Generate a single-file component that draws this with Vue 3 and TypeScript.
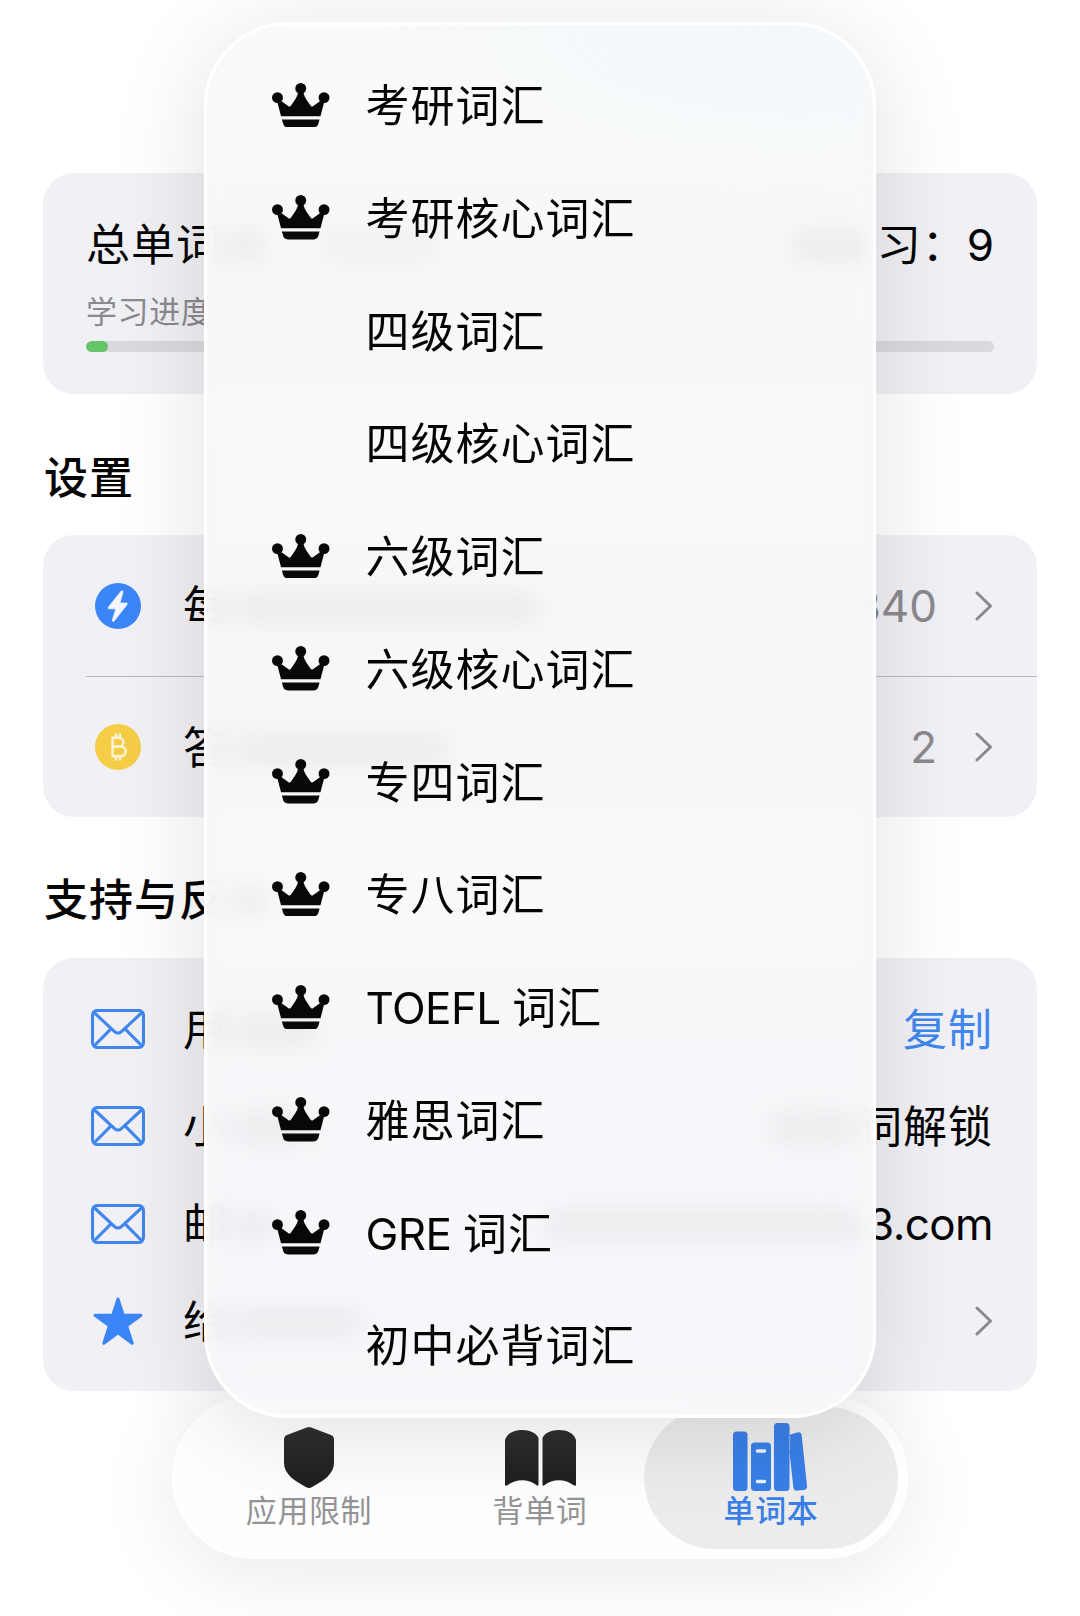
<script setup lang="ts">
interface Book {
  latin?: string
  name: string
  locked: boolean
}

// `trace` is the width of the part that lies under the glass menu.
interface SettingRow {
  icon: 'bolt' | 'coin'
  label: string
  trace: number
  value: string
}

interface SupportRow {
  icon: 'mail' | 'star'
  label: string
  trace: number
  value?: string
  valueTrace?: number
  kind?: 'link' | 'latin'
}

const learned = 9
const progress = 2.4

const books: Book[] = [
  { name: '考研词汇', locked: true },
  { name: '考研核心词汇', locked: true },
  { name: '四级词汇', locked: false },
  { name: '四级核心词汇', locked: false },
  { name: '六级词汇', locked: true },
  { name: '六级核心词汇', locked: true },
  { name: '专四词汇', locked: true },
  { name: '专八词汇', locked: true },
  { latin: 'TOEFL ', name: '词汇', locked: true },
  { name: '雅思词汇', locked: true },
  { latin: 'GRE ', name: '词汇', locked: true },
  { name: '初中必背词汇', locked: false },
]

const settings: SettingRow[] = [
  { icon: 'bolt', label: '每', trace: 306, value: '340' },
  { icon: 'coin', label: '答', trace: 216, value: '2' },
]

const support: SupportRow[] = [
  { icon: 'mail', label: '用', trace: 84, value: '复制', kind: 'link' },
  { icon: 'mail', label: '小', trace: 80, value: '词解锁', valueTrace: 86 },
  { icon: 'mail', label: '邮', trace: 40, value: '3.com', valueTrace: 320, kind: 'latin' },
  { icon: 'star', label: '给', trace: 128 },
]
</script>

<template>
  <div class="screen">
    <main class="page">
      <section class="card summary">
        <div class="summary-line">
          <span>总单词<i class="trace" style="width: 40px"></i><i class="trace far" style="width: 116px"></i></span>
          <span><i class="trace" style="width: 84px"></i>习：{{ learned }}</span>
        </div>
        <div class="caption">学习进度</div>
        <div class="track"><div class="fill" :style="{ width: progress + '%' }"></div></div>
      </section>

      <h2 class="heading">设置</h2>
      <section class="card settings">
        <div v-for="row in settings" :key="row.label" class="row setting">
          <span class="icon-slot">
            <svg v-if="row.icon === 'bolt'" width="46" height="46" viewBox="0 0 46 46">
              <circle cx="23" cy="23" r="23" fill="#3b86f7" />
              <path d="M26.2 8.1 13.400 24.200c-.6.8-.3 1.600.7 1.600h6.800l-3.500 11.400c-.3 1.200.9 1.700 1.700.8L32 21.600c.6-.8.3-1.500-.6-1.500h-6.500l3-10.900c.4-1.300-.9-2-1.700-1.100z" fill="#f4f6fd" stroke="#f4f6fd" stroke-width=".8" />
            </svg>
            <svg v-else width="46" height="46" viewBox="0 0 46 46">
              <circle cx="23" cy="23" r="23" fill="#f5cd47" />
              <path d="M17.500 13.800V32.200M17.500 13.800H24a4.300 4.300 0 0 1 0 8.700H17.500M24 22.500h1.800a4.800 4.800 0 0 1 0 9.700H17.500M21 10.500v3.300M25 10.500v3.300M21 32.200v3.400M25 32.200v3.400" fill="none" stroke="#fdf6dc" stroke-width="2.400" stroke-linecap="round" stroke-linejoin="round" />
            </svg>
          </span>
          <span class="label">{{ row.label }}<i class="trace" :style="{ width: row.trace + 'px' }"></i></span>
          <span class="value muted">{{ row.value }}</span>
          <svg class="chevron" width="18" height="30" viewBox="0 0 18 30">
            <path d="M2 2 15.500 15 2 28" />
          </svg>
        </div>
      </section>

      <h2 class="heading second">支持与反<i class="trace" style="width: 40px"></i></h2>
      <section class="card support">
        <div v-for="row in support" :key="row.label" class="row">
          <span class="icon-slot">
            <svg v-if="row.icon === 'mail'" width="54" height="40" viewBox="0 0 54 40" fill="none" stroke="#3f87ee" stroke-width="3.100">
              <rect x="1.500" y="1.500" width="51" height="37" rx="5" />
              <path d="M3 3.500 23.300 22.300q3.700 3.400 7.400 0L51 3.500M3 37 19.500 20.300M51 37 34.500 20.300" />
            </svg>
            <svg v-else width="50" height="49" viewBox="0 0 50 49">
              <path d="M25 2 30.300 18.300H48L33.700 28.900 39.200 46.300 25 35.700 10.800 46.300 16.300 28.900 2 18.300H19.700z" fill="#3b86f7" stroke="#3b86f7" stroke-width="3" stroke-linejoin="round" />
            </svg>
          </span>
          <span class="label">{{ row.label }}<i class="trace" :style="{ width: row.trace + 'px' }"></i></span>
          <span v-if="row.value" class="value" :class="row.kind"><i v-if="row.valueTrace" class="trace" :style="{ width: row.valueTrace + 'px' }"></i>{{ row.value }}</span>
          <svg v-else class="chevron" width="18" height="30" viewBox="0 0 18 30">
            <path d="M2 2 15.500 15 2 28" />
          </svg>
        </div>
      </section>
    </main>

    <nav class="tabs">
      <div class="tab">
        <svg width="50" height="61" viewBox="0 0 50 61">
          <path d="M22.800.600Q25-.4 27.200.600L47 8q3 1.200 3 4.500V36c0 11-10.500 18-22.300 24.200q-2.700 1.400-5.400 0C10.500 54 0 47 0 36V12.500Q0 9.200 3 8z" fill="url(#ink)" />
          <defs>
            <linearGradient id="ink" x1="0" y1="0" x2="0" y2="1">
              <stop offset="0" stop-color="#2f2f30" />
              <stop offset="1" stop-color="#1e1d1f" />
            </linearGradient>
          </defs>
        </svg>
        <span>应用限制</span>
      </div>
      <div class="tab">
        <svg width="71" height="61" viewBox="0 0 71 61">
          <path d="M0 13C2 6 9 3 17 3s14.500 3 16.500 8V57.500q0 2-2.200.600C24 51.500 10 51.500 2.500 58.300Q0 59.500 0 57.500zM71 13C69 6 62 3 54 3s-14.500 3-16.500 8V57.500q0 2 2.200.600C47 51.500 61 51.500 68.500 58.300q2.500 1.200 2.500-.800z" fill="url(#ink)" />
        </svg>
        <span>背单词</span>
      </div>
      <div class="tab active">
        <svg width="75" height="68" viewBox="0 0 75 68" fill="#397fe7">
          <rect x="0" y="8.500" width="14.500" height="59.500" rx="3.500" />
          <rect x="18" y="19.500" width="20" height="48.500" rx="3.500" />
          <rect x="41" y="0" width="15.500" height="68" rx="3.500" />
          <path d="M56 12 64.800 9.300q3.500-.4 3.900 3.100L74 63q.4 3.500-3.100 3.900l-6.600.700q-3.500.400-3.900-3.100L55.500 20z" />
          <path d="M56.700 12.500v14" stroke="#e3e3e3" stroke-width=".6" />
          <path d="M24.500 28h7M24.500 58.500h7" stroke="#eef1f7" stroke-width="3.600" stroke-linecap="round" />
        </svg>
        <span>单词本</span>
      </div>
    </nav>

    <div class="menu">
      <div v-for="(book, i) in books" :key="i" class="item">
        <span class="crown">
          <svg v-if="book.locked" width="57.500" height="44.600" viewBox="0 0 58 45" fill="#080808">
            <circle cx="5.500" cy="14.800" r="5.500" />
            <circle cx="29" cy="5.500" r="5.500" />
            <circle cx="52.500" cy="14.800" r="5.500" />
            <path d="M26.500 9h5q1 4.500 3 7.500l4.300 6.300q1.200 1.700 2.900.4l7.300-5.200 3.800.6L48.900 33.500H9.100L5.200 18.600 9 18l7.300 5.200q1.700 1.300 2.900-.4l4.300-6.300q2-3 3-7.500z" />
            <path d="M10 36.800h38l-1.200 4.400Q45.800 44.800 42 44.800H16q-3.800 0-4.800-3.600z" />
          </svg>
        </span>
        <span class="name"><span v-if="book.latin" class="latin">{{ book.latin }}</span>{{ book.name }}</span>
      </div>
    </div>
  </div>
</template>

<style>
body {
  margin: 0;
  background: #fff;
}
</style>

<style scoped>
.screen {
  position: relative;
  box-sizing: border-box;
  width: 1080px;
  height: 1616px;
  overflow: hidden;
  background: #fff;
  color: #050505;
  font-family: Inter, 'Noto Sans CJK SC', sans-serif;
  font-size: 44px;
  letter-spacing: 1px;
  line-height: 60px;
  white-space: nowrap;
}

.page {
  display: flex;
  flex-direction: column;
  padding: 173px 43px 0;
}

.card {
  box-sizing: border-box;
  border-radius: 31px;
  background: #f1f0f5;
  overflow: hidden;
}

/* Illegible remains of a line, seen only through the blurred menu. */
.trace {
  display: inline-block;
  height: 32px;
  margin: 0 4px 0 6px;
  border-radius: 10px;
  background: rgba(0, 0, 0, 0.32);
  vertical-align: -1px;
}

.trace.far {
  margin-left: 50px;
  background: rgba(0, 0, 0, 0.22);
}

.summary {
  height: 221px;
  padding: 42px 42px 0 43px;
}

.summary-line {
  display: flex;
  justify-content: space-between;
  height: 60px;
}

.caption {
  margin-top: 15px;
  color: #8a8a8e;
  font-size: 31px;
  letter-spacing: 0.6px;
  line-height: 44px;
}

.track {
  height: 11px;
  margin: 7px 1px 0 0;
  border-radius: 6px;
  background: #dad9de;
  overflow: hidden;
}

.fill {
  height: 100%;
  border-radius: 6px;
  background: #65c466;
}

.heading {
  height: 60px;
  margin: 54px 0 27px 1px;
  font-size: 44px;
  font-weight: 500;
  line-height: 61px;
}

.heading.second {
  margin: 53px 0 28px 1px;
}

.settings {
  height: 282px;
}

.row {
  display: flex;
  align-items: center;
  box-sizing: border-box;
  height: 97.5px;
  padding: 0 44px 0 48px;
}

.setting {
  position: relative;
  height: 141px;
}

.setting + .setting::before {
  content: '';
  position: absolute;
  top: 0;
  left: 43px;
  right: 0;
  height: 1px;
  background: #bbbabf;
}

.support {
  height: 433px;
  padding-top: 22px;
}

.icon-slot {
  display: flex;
  justify-content: center;
  width: 54px;
  margin-right: 38px;
}

.label,
.value {
  padding-top: 2px;
}

.value {
  margin-left: auto;
}

.muted {
  padding-top: 0;
  color: #8a8a8e;
  letter-spacing: 0;
}

.link {
  color: #3f87ee;
}

.latin {
  letter-spacing: -0.6px;
}

.value.latin {
  padding-top: 0;
}

.chevron {
  margin-left: 38px;
  fill: none;
  stroke: #8a8a8e;
  stroke-width: 3;
  stroke-linecap: round;
  stroke-linejoin: round;
}

.label + .chevron {
  margin-left: auto;
}

.tabs {
  position: absolute;
  left: 172px;
  top: 1396px;
  display: flex;
  box-sizing: border-box;
  width: 736px;
  height: 163px;
  padding: 8px 7px;
  border: 3px solid #fff;
  border-radius: 82px;
  background: #fefefe;
  box-shadow: 0 14px 84px rgba(0, 0, 0, 0.09);
}

.tab {
  display: flex;
  flex: 0 0 254px;
  flex-direction: column;
  align-items: center;
  justify-content: flex-start;
  height: 142px;
  margin-right: -23px;
  padding-top: 20px;
  box-sizing: border-box;
  color: #949496;
  font-size: 31px;
  letter-spacing: 0.6px;
  line-height: 44px;
}

.tab span {
  margin-top: 1px;
}

.tab.active {
  margin-right: 0;
  padding-top: 16px;
  border-radius: 71px;
  background: #ececec;
  color: #397fe7;
}

.tab.active svg {
  margin-left: -2px;
}

.tab.active span {
  margin-top: -2px;
  font-weight: 500;
}

.menu {
  position: absolute;
  left: 204px;
  top: 22px;
  box-sizing: border-box;
  width: 672px;
  height: 1396px;
  padding: 24px 0 0 65px;
  border: 3px solid #fff;
  border-radius: 84px;
  background:
    linear-gradient(90deg, rgba(247, 247, 249, 0.85), rgba(247, 247, 249, 0) 18px, rgba(247, 247, 249, 0) calc(100% - 18px), rgba(247, 247, 249, 0.85)),
    radial-gradient(ellipse 420px 170px at 88% 0, rgba(240, 247, 252, 0.7), rgba(240, 247, 252, 0)),
    linear-gradient(rgba(248, 249, 249, 0.86), rgba(247, 248, 250, 0.86));
  background-clip: padding-box;
  backdrop-filter: blur(11px);
  box-shadow: 0 12px 96px rgba(0, 0, 0, 0.12);
}

.item {
  display: flex;
  align-items: center;
  height: 112.75px;
}

.crown {
  display: flex;
  width: 58px;
  margin: -1px 35.5px 0 0;
}

.name {
  padding-top: 1.5px;
}

.name .latin {
  white-space: pre;
}
</style>
